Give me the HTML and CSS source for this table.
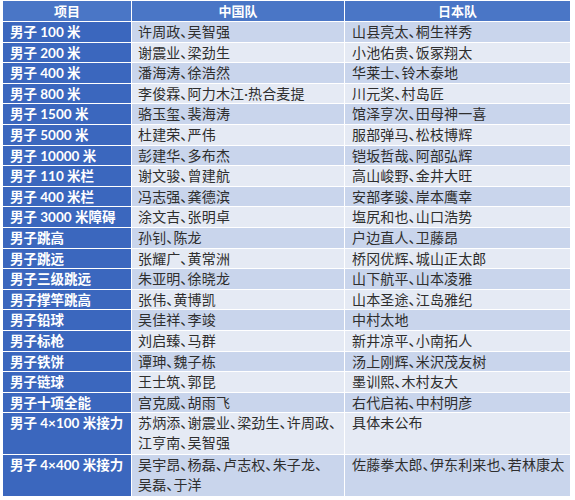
FILE: index.html
```html
<!DOCTYPE html>
<html lang="zh-CN">
<head>
<meta charset="utf-8">
<title>男子田径项目名单</title>
<link rel="stylesheet" href="styles.css">
</head>
<body>
<table class="roster">
  <thead>
    <tr><th>项目</th><th>中国队</th><th>日本队</th></tr>
  </thead>
  <tbody>
    <tr class="blue"><td class="ev">男子 100 米</td><td>许周政、吴智强</td><td>山县亮太、桐生祥秀</td></tr>
    <tr class="pale"><td class="ev">男子 200 米</td><td>谢震业、梁劲生</td><td>小池佑贵、饭冢翔太</td></tr>
    <tr class="blue"><td class="ev">男子 400 米</td><td>潘海涛、徐浩然</td><td>华莱士、铃木泰地</td></tr>
    <tr class="pale"><td class="ev">男子 800 米</td><td>李俊霖、阿力木江·热合麦提</td><td>川元奖、村岛匠</td></tr>
    <tr class="blue"><td class="ev">男子 1500 米</td><td>骆玉玺、裴海涛</td><td>馆泽亨次、田母神一喜</td></tr>
    <tr class="pale"><td class="ev">男子 5000 米</td><td>杜建荣、严伟</td><td>服部弹马、松枝博辉</td></tr>
    <tr class="blue"><td class="ev">男子 10000 米</td><td>彭建华、多布杰</td><td>铠坂哲哉、阿部弘辉</td></tr>
    <tr class="pale"><td class="ev">男子 110 米栏</td><td>谢文骏、曾建航</td><td>高山峻野、金井大旺</td></tr>
    <tr class="blue"><td class="ev">男子 400 米栏</td><td>冯志强、龚德滨</td><td>安部孝骏、岸本鹰幸</td></tr>
    <tr class="pale"><td class="ev">男子 3000 米障碍</td><td>涂文吉、张明卓</td><td>塩尻和也、山口浩势</td></tr>
    <tr class="blue"><td class="ev">男子跳高</td><td>孙钊、陈龙</td><td>户边直人、卫藤昂</td></tr>
    <tr class="pale"><td class="ev">男子跳远</td><td>张耀广、黄常洲</td><td>桥冈优辉、城山正太郎</td></tr>
    <tr class="blue"><td class="ev">男子三级跳远</td><td>朱亚明、徐晓龙</td><td>山下航平、山本凌雅</td></tr>
    <tr class="pale"><td class="ev">男子撑竿跳高</td><td>张伟、黄博凯</td><td>山本圣途、江岛雅纪</td></tr>
    <tr class="blue"><td class="ev">男子铅球</td><td>吴佳祥、李竣</td><td>中村太地</td></tr>
    <tr class="pale"><td class="ev">男子标枪</td><td>刘启臻、马群</td><td>新井凉平、小南拓人</td></tr>
    <tr class="blue"><td class="ev">男子铁饼</td><td>谭珅、魏子栋</td><td>汤上刚辉、米沢茂友树</td></tr>
    <tr class="pale"><td class="ev">男子链球</td><td>王士筑、郭昆</td><td>墨训熙、木村友大</td></tr>
    <tr class="blue"><td class="ev">男子十项全能</td><td>宫克威、胡雨飞</td><td>右代启祐、中村明彦</td></tr>
    <tr class="pale tall"><td class="ev">男子 4×100 米接力</td><td>苏炳添、谢震业、梁劲生、许周政、<br>江亨南、吴智强</td><td>具体未公布</td></tr>
    <tr class="blue tall"><td class="ev">男子 4×400 米接力</td><td>吴宇昂、杨磊、卢志权、朱子龙、<br>吴磊、于洋</td><td>佐藤拳太郎、伊东利来也、若林康太</td></tr>
  </tbody>
</table>
</body>
</html>
```

FILE: styles.css
```css
html, body {
  margin: 0;
  padding: 0;
  background: #ffffff;
}

body {
  font-family: Lato, "Noto Sans CJK SC", sans-serif;
  font-size: 14px;
  color: #2e2e2e;
  font-feature-settings: "palt" 1;
}

.roster {
  display: grid;
  grid-template-columns: 128px 212px 225px;
  grid-template-rows: 20px repeat(19, 19.6px) 41px 41px;
  gap: 1px;
  padding: 1px;
  margin: 0 0 0 2px;
  width: max-content;
  background: #ffffff;
}

.roster thead,
.roster tbody,
.roster tr {
  display: contents;
}

.roster th,
.roster td {
  display: block;
  padding: 0 6px;
  line-height: 20px;
  white-space: nowrap;
  overflow: hidden;
  text-align: left;
}

.roster th {
  background: #4a76c6;
  color: #ffffff;
  font-weight: 700;
  font-size: 13px;
  text-align: center;
}

.roster td.ev {
  background: #3b67be;
  color: #ffffff;
  font-weight: 700;
  font-size: 13.5px;
  padding-left: 7px;
}

.roster td:nth-child(3) {
  padding-left: 7px;
}

.blue td { background: #c9d5ec; }
.pale td { background: #e5eaf4; }

.roster td + td {
  letter-spacing: 0.15px;
}
```
